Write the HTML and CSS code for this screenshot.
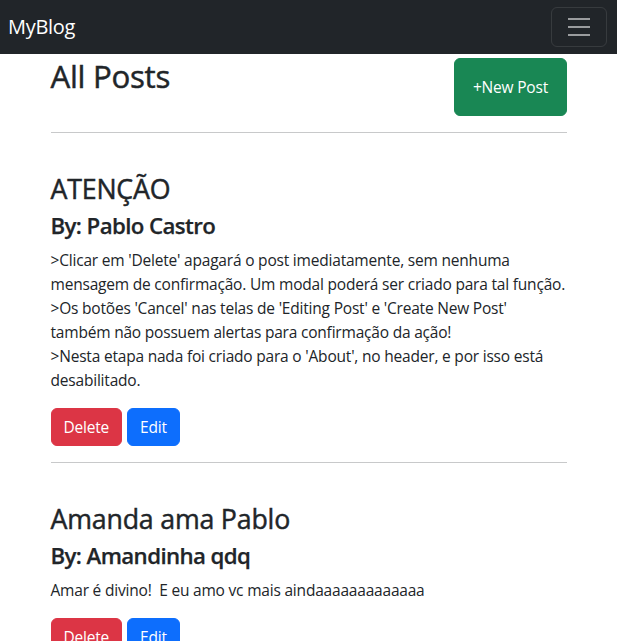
FILE: index.html
```html
<!DOCTYPE html>
<html lang="pt-BR">
<head>
<meta charset="utf-8">
<title>MyBlog</title>
<link rel="stylesheet" href="styles.css">
</head>
<body>
<nav class="navbar">
  <a class="brand" href="#">MyBlog</a>
  <button class="toggler" type="button" aria-label="Toggle navigation">
    <svg class="toggler-icon" viewBox="0 0 30 30" width="30" height="30"><path d="M4 7h22M4 15h22M4 23h22" stroke="rgba(255,255,255,0.55)" stroke-width="2" stroke-linecap="butt" fill="none"/></svg>
  </button>
</nav>
<main class="container">
  <div class="page-head">
    <h1 class="page-title">All Posts</h1>
    <a class="btn btn-success btn-new" href="#">+New Post</a>
  </div>
  <hr class="divider">
  <article class="post">
    <h2 class="post-title">ATENÇÃO</h2>
    <h4 class="post-author">By: Pablo Castro</h4>
    <p class="post-body">&gt;Clicar em 'Delete' apagará o post imediatamente, sem nenhuma<br>mensagem de confirmação. Um modal poderá ser criado para tal função.<br>&gt;Os botões 'Cancel' nas telas de 'Editing Post' e 'Create New Post'<br>também não possuem alertas para confirmação da ação!<br>&gt;Nesta etapa nada foi criado para o 'About', no header, e por isso está<br>desabilitado.</p>
    <div class="actions">
      <button class="btn btn-danger" type="button">Delete</button>
      <button class="btn btn-primary" type="button">Edit</button>
    </div>
  </article>
  <hr class="divider">
  <article class="post">
    <h2 class="post-title">Amanda ama Pablo</h2>
    <h4 class="post-author">By: Amandinha qdq</h4>
    <p class="post-body">Amar é divino!&nbsp; E eu amo vc mais aindaaaaaaaaaaaaa</p>
    <div class="actions">
      <button class="btn btn-danger" type="button">Delete</button>
      <button class="btn btn-primary" type="button">Edit</button>
    </div>
  </article>
  <hr class="divider">
</main>
</body>
</html>
```
FILE: styles.css
```css
* { box-sizing: border-box; }
body {
  margin: 0;
  font-family: "Open Sans", "Noto Sans", sans-serif;
  font-size: 15.5px;
  letter-spacing: -0.2px;
  line-height: 24px;
  color: #212529;
  background: #fff;
}
.navbar {
  display: flex;
  justify-content: space-between;
  align-items: center;
  background: #212529;
  padding: 7px 10px 7px 8px;
  height: 54px;
}
.brand {
  color: #fff;
  text-decoration: none;
  font-size: 20px;
  letter-spacing: -0.3px;
  line-height: 30px;
}
.toggler {
  width: 56px;
  height: 40px;
  padding: 4px 12px;
  background: transparent;
  border: 1px solid rgba(255,255,255,0.1);
  border-radius: 6px;
  display: flex;
  align-items: center;
  justify-content: center;
}
.toggler-icon { display: block; }
.container {
  width: 516px;
  margin: 0 auto;
}
.page-head {
  display: flex;
  justify-content: space-between;
  align-items: flex-start;
  padding-top: 4px;
}
.page-title {
  margin: 0 0 8px;
  font-size: 31.26px;
  line-height: 1.2;
  font-weight: 400;
  letter-spacing: -0.3px;
  -webkit-text-stroke: 0.45px currentColor;
}
.btn {
  display: inline-block;
  font-family: inherit;
  font-size: 15.5px;
  letter-spacing: -0.2px;
  line-height: 24px;
  padding: 6px 12px;
  border: 1px solid transparent;
  border-radius: 6px;
  color: #fff;
  text-decoration: none;
  cursor: pointer;
}
.btn-success { background: #198754; border-color: #198754; }
.btn-danger { background: #dc3545; border-color: #dc3545; }
.btn-primary { background: #0d6efd; border-color: #0d6efd; }
.btn-new { padding: 16px 17.5px; }
.divider {
  margin: 16px 0;
  border: 0;
  border-top: 1px solid #c8c9ca;
  height: 0;
}
.post { padding-top: 24px; }
.post-title {
  margin: 0 0 8px;
  font-size: 26.75px;
  line-height: 1.2;
  font-weight: 400;
  letter-spacing: -0.2px;
  -webkit-text-stroke: 0.45px currentColor;
}
.post-author {
  margin: 0 0 8px;
  font-size: 22.25px;
  line-height: 1.2;
  font-weight: 600;
  letter-spacing: -0.6px;
  -webkit-text-stroke: 0.25px currentColor;
}
.post-body {
  margin: 0 0 16px;
  white-space: nowrap;
}
.actions {
  display: flex;
  gap: 5px;
}
```
